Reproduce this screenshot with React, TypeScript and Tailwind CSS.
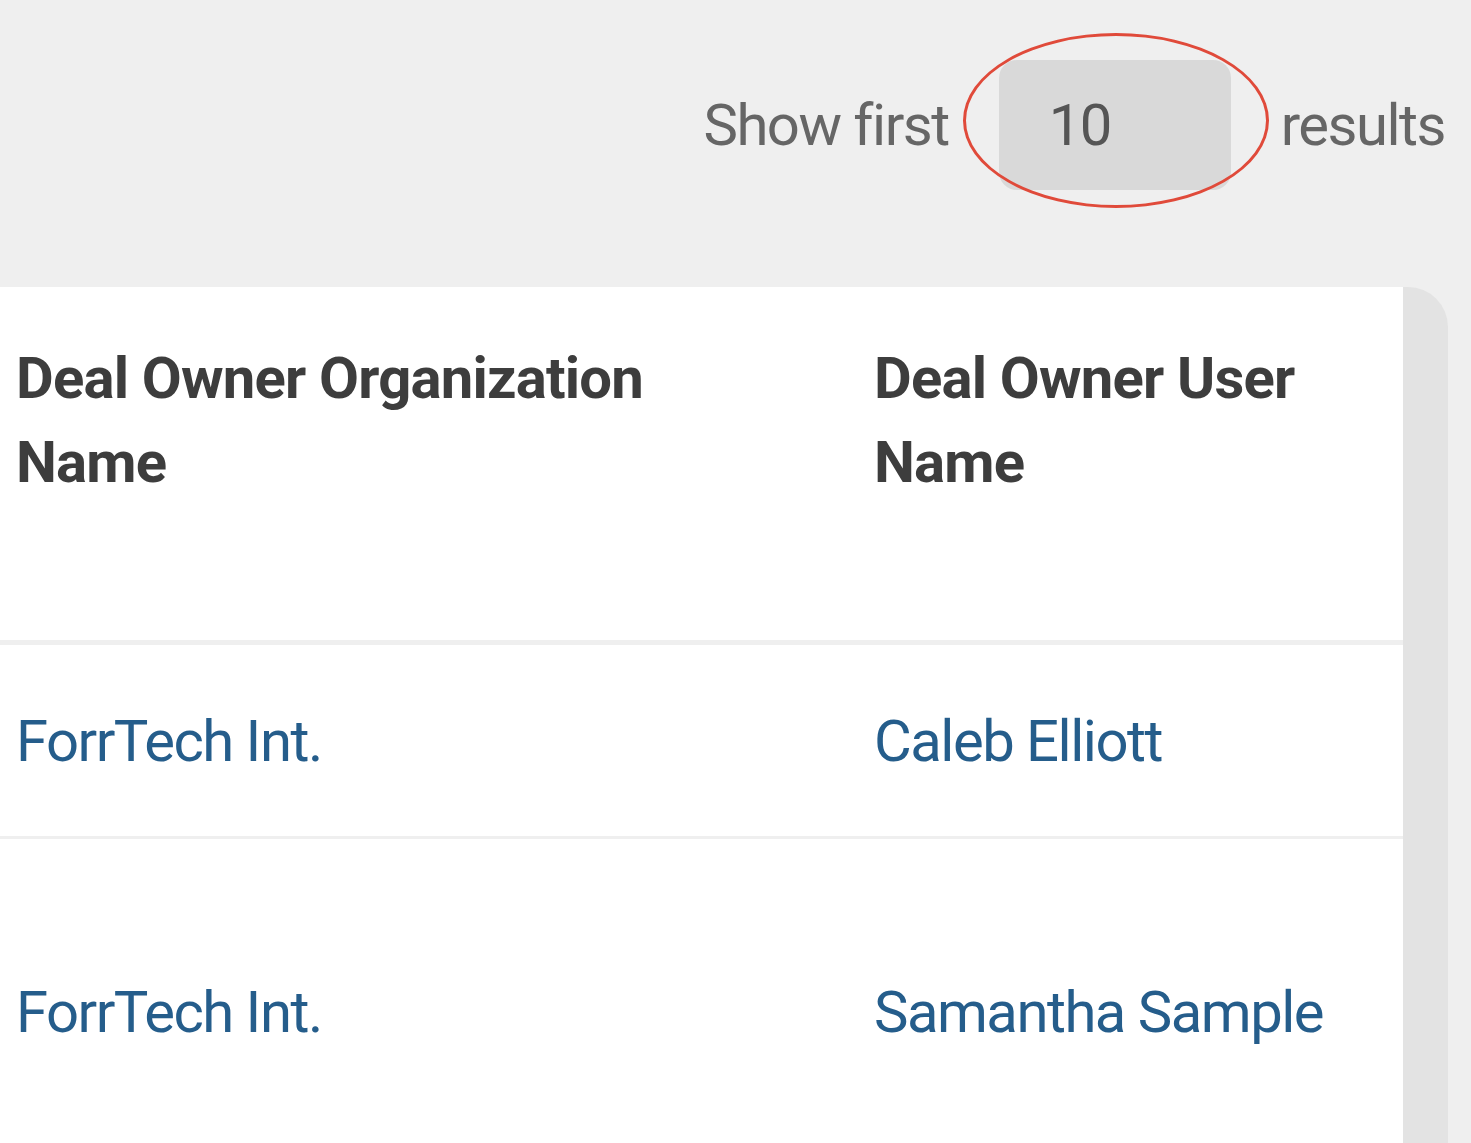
import React from 'react';

type Row = { org: string; user: string; height: string };

const ROWS: Row[] = [
  { org: 'ForrTech Int.', user: 'Caleb Elliott', height: 'h-[194px]' },
  { org: 'ForrTech Int.', user: 'Samantha Sample', height: 'h-[348px]' },
];

export default function App() {
  return (
    <div className="h-[1143px] overflow-hidden bg-[#efefef] font-['Roboto',sans-serif]">
      {/* Result count picker */}
      <div className="flex items-center justify-end gap-[50px] pt-[60px] pr-[26px]">
        <span className="text-[58px] leading-none tracking-[-1.5px] text-[#666666]">Show first</span>
        <div className="relative">
          <div className="flex h-[130px] w-[232px] items-center rounded-[18px] bg-[#d9d9d9] pl-[50px] text-[58px] leading-none tracking-[-1.5px] text-[#555555]">
            10
          </div>
          {/* annotation ring */}
          <div className="pointer-events-none absolute -left-[36px] -top-[27px] h-[175px] w-[306px] rounded-[50%] border-[3px] border-[#e04a3a]" />
        </div>
        <span className="text-[58px] leading-none tracking-[-1.5px] text-[#666666]">results</span>
      </div>

      {/* Table card */}
      <div className="mt-[97px] flex w-[1448px] overflow-hidden rounded-tr-[40px]">
        <div className="flex-1 bg-white">
          <div className="grid grid-cols-[858px_1fr] border-b-[5px] border-[#efefef]">
            <div className="h-[353px] pl-4 pt-[49px] text-[58px] font-bold leading-[84px] tracking-[-0.8px] text-[#3d3d3d]">
              <div className="max-w-[660px]">Deal Owner Organization Name</div>
            </div>
            <div className="h-[353px] pl-4 pt-[49px] text-[58px] font-bold leading-[84px] tracking-[-0.8px] text-[#3d3d3d]">
              Deal Owner User Name
            </div>
          </div>
          {ROWS.map((row, i) => (
            <div
              key={i}
              className={`grid grid-cols-[858px_1fr] items-center border-b-[3px] border-[#efefef] ${row.height}`}
            >
              <div className="pl-4 text-[58px] leading-[84px] tracking-[-1.5px] text-[#255d8b]">{row.org}</div>
              <div className="pl-4 text-[58px] leading-[84px] tracking-[-1.5px] text-[#255d8b]">{row.user}</div>
            </div>
          ))}
        </div>
        {/* scrollbar track */}
        <div className="w-[45px] bg-[#e3e3e3]" />
      </div>
    </div>
  );
}
